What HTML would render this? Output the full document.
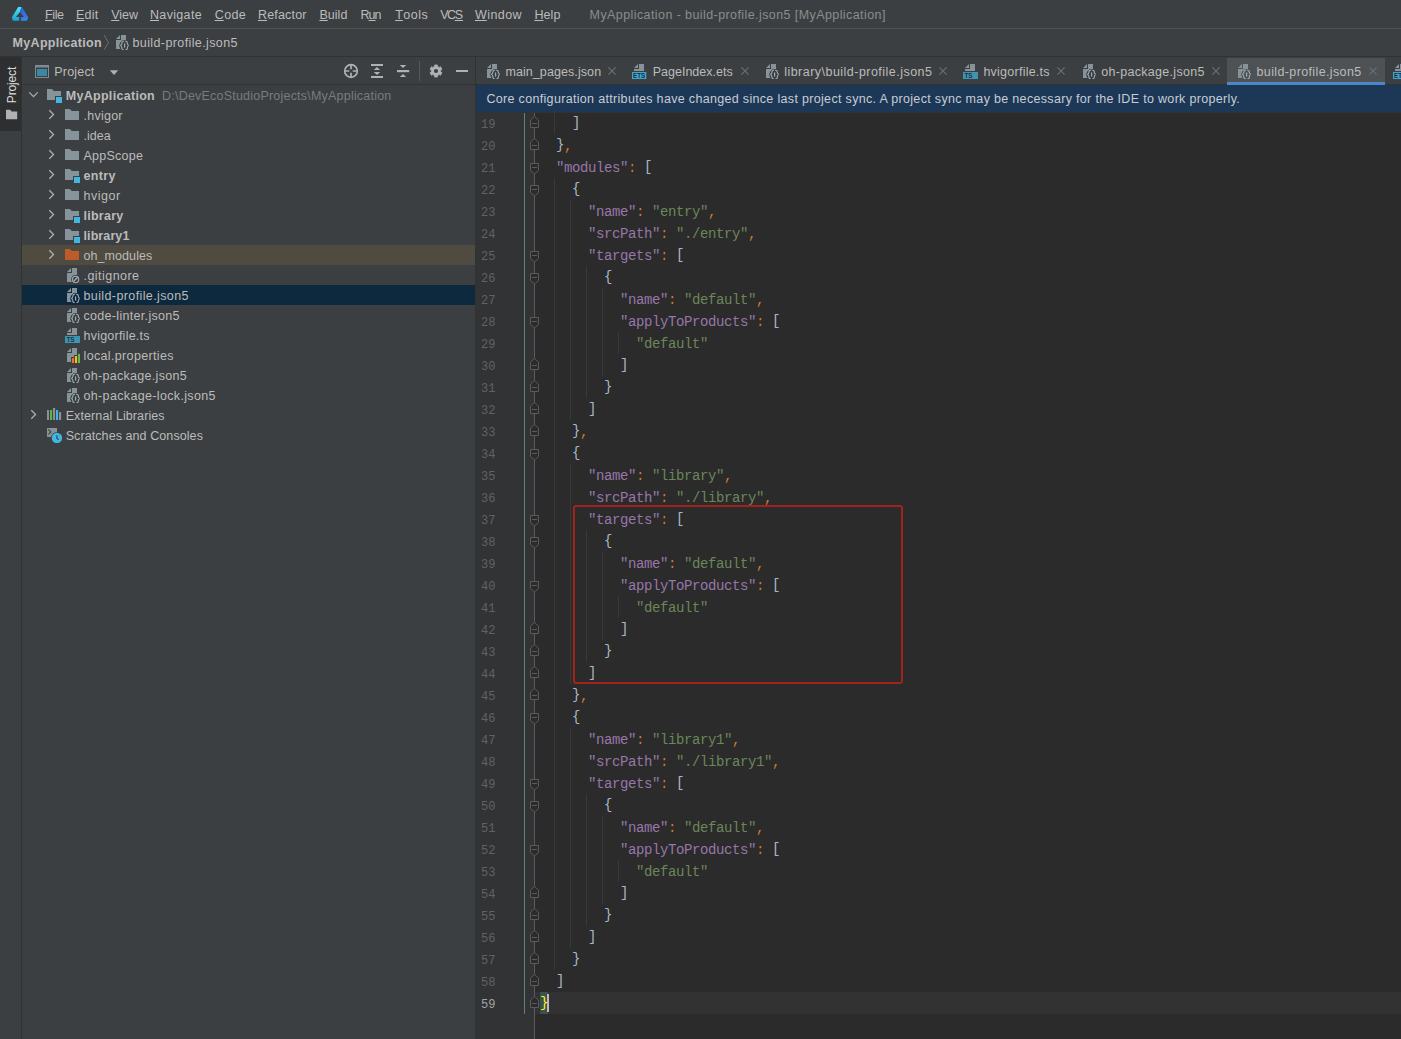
<!DOCTYPE html>
<html>
<head>
<meta charset="utf-8">
<title>MyApplication - build-profile.json5</title>
<style>
*{box-sizing:border-box;margin:0;padding:0}
html,body{width:1401px;height:1039px;overflow:hidden;background:#3c3f41}
body{font-family:"Liberation Sans",sans-serif;font-size:12.5px;color:#bbbbbb;position:relative}
.abs{position:absolute}
.t{position:absolute;white-space:pre;line-height:16px;height:16px;transform-origin:0 50%}
svg{position:absolute;overflow:visible}
/* top bars */
#menubar{left:0;top:0;width:1401px;height:28px;background:#3c3f41}
#menuline{left:0;top:28px;width:1401px;height:1px;background:#515151}
#navbar{left:0;top:29px;width:1401px;height:27px;background:#3c3f41}
#navline{left:0;top:56px;width:1401px;height:1px;background:#323232}
/* left strip */
#strip{left:0;top:57px;width:22px;height:982px;background:#3c3f41}
#striptab{left:0;top:57px;width:21px;height:74px;background:#2d2f30}
#stripline{left:21px;top:57px;width:1px;height:982px;background:#323232}
/* project */
#phead{left:22px;top:57px;width:453px;height:27px;background:#3c3f41}
#pheadline{left:22px;top:84px;width:453px;height:1px;background:#323232}
#tree{left:22px;top:85px;width:453px;height:954px;background:#3c3f41}
.row{position:absolute;left:22px;width:453px;height:20px}
/* editor */
#edsplit{left:475px;top:57px;width:1px;height:982px;background:#323232}
#tabs{left:476px;top:57px;width:925px;height:28px;background:#3c3f41}
#tabsline{left:475px;top:84px;width:926px;height:1px;background:#323232}
#seltab{left:1227px;top:58px;width:158px;height:24px;background:#4e5254}
#selul{left:1227px;top:82px;width:158px;height:3px;background:#4a88c7}
#banner{left:475px;top:85px;width:926px;height:27px;background:#1d3857}
#editor{left:475px;top:112px;width:926px;height:927px;background:#2b2b2b}
#gutter{left:475px;top:112px;width:60px;height:927px;background:#313335}
#caretrow{left:535px;top:992px;width:866px;height:22px;background:#323232}
.ln{position:absolute;left:475px;width:40px;height:22px;line-height:22px;font-family:"Liberation Mono",monospace;font-size:12px;color:#606366;padding-left:6px;white-space:pre}
.cl{position:absolute;left:540px;height:22px;line-height:22px;font-family:"Liberation Mono",monospace;font-size:14px;letter-spacing:-0.4px;color:#a9b7c6;white-space:pre}
.b{position:relative;top:-1px}.k{color:#9876aa}.s{color:#6a8759}.p{color:#cc7832}
.ig{position:absolute;width:1px;background:#393939}
</style>
</head>
<body>
<div class="abs" id="menubar"></div>
<div class="abs" id="menuline"></div>
<div class="abs" id="navbar"></div>
<div class="abs" id="navline"></div>
<div class="abs" id="strip"></div>
<div class="abs" id="striptab"></div>
<div class="abs" id="stripline"></div>
<div class="abs" id="phead"></div>
<div class="abs" id="pheadline"></div>
<div class="abs" id="tree"></div>
<div class="abs" id="tabs"></div>
<div class="abs" id="tabsline"></div>
<div class="abs" id="seltab"></div>
<div class="abs" id="selul"></div>
<div class="abs" id="banner"></div>
<div class="abs" id="editor"></div>
<div class="abs" id="gutter"></div>
<div class="abs" id="caretrow"></div>
<div class="abs" id="edsplit"></div>
<svg width="0" height="0" style="left:0;top:0">
<defs>
<symbol id="folder" viewBox="0 0 16 16"><path d="M1 2H5.700L7.9 4H15V13H1z" fill="#87939a"/></symbol>
<symbol id="folderx" viewBox="0 0 16 16"><path d="M1 2H5.700L7.9 4H15V13H1z" fill="#bd5c2a"/></symbol>
<symbol id="mfolder" viewBox="0 0 16 16"><path d="M1 2H5.700L7.9 4H15V9H9V13H1z" fill="#87939a"/><rect x="10" y="10" width="6.2" height="6.1" fill="#40b6e0"/></symbol>
<symbol id="fjson" viewBox="0 0 16 16"><path d="M3 5L7 1V5z" fill="#87939a"/><path d="M8 1H13V6.300H9.600L7.200 8.400 6.100 11.500 7 14.300 7.500 15H3V6H8z" fill="#87939a"/><g fill="none" stroke="#9eaab2" stroke-width="1.150" stroke-linecap="round"><path d="M10.400 7.300c-1.400 0-1.500 .7-1.500 1.800s-.2 2.100-1.700 2.400c1.500 .3 1.700 1.300 1.700 2.400s.1 1.800 1.500 1.800"/><path d="M12.800 7.300c1.400 0 1.500 .7 1.500 1.800s.2 2.100 1.700 2.400c-1.500 .3-1.700 1.300-1.700 2.400s-.1 1.800-1.500 1.800"/><path d="M11.600 9.900v3.200" stroke-width="1.250"/></g></symbol>
<symbol id="fts" viewBox="0 0 16 16"><path d="M3 5L7 1V5z" fill="#87939a"/><path d="M8 1H13V8H3V6H8z" fill="#87939a"/><rect x="1" y="9" width="15.1" height="7.1" fill="#3f94b4"/><text x="2.4" y="14.9" font-family="Liberation Sans" font-weight="bold" font-size="6.4" fill="#20343f">TS</text></symbol>
<symbol id="fets" viewBox="0 0 16 16"><path d="M3 5L7 1V5z" fill="#87939a"/><path d="M8 1H13V8H3V6H8z" fill="#87939a"/><rect x="1" y="9" width="14.3" height="7" fill="#3ea6d0"/><text x="2" y="14.9" font-family="Liberation Sans" font-weight="bold" font-size="6.3" fill="#1f2f38">ETS</text></symbol>
<symbol id="fgit" viewBox="0 0 16 16"><path d="M3 5L7 1V5z" fill="#87939a"/><path d="M8 1H13V8H11.600A4.5 4.5 0 0 0 7.2 12.4 4.5 4.5 0 0 0 8 15H3V6H8z" fill="#87939a"/><circle cx="11.6" cy="12.4" r="3.1" fill="none" stroke="#a3adb4" stroke-width="1.1"/><path d="M9.5 14.500L13.7 10.3" stroke="#a3adb4" stroke-width="1.3"/></symbol>
<symbol id="fprop" viewBox="0 0 16 16"><path d="M3 5L7 1V5z" fill="#87939a"/><path d="M8 1H13V8H10V10H7V15H3V6H8z" fill="#87939a"/><rect x="7.9" y="11.1" width="2.1" height="4.9" fill="#f4711f"/><rect x="10.9" y="9" width="2.2" height="7" fill="#fab736"/><rect x="14" y="6.9" width="2.1" height="9.1" fill="#63bc3b"/></symbol>
<symbol id="extlib" viewBox="0 0 16 16"><rect x="1" y="3" width="2" height="10" fill="#87939a"/><rect x="4" y="3" width="2.1" height="10" fill="#62b543"/><rect x="7" y="1" width="2.1" height="12" fill="#87939a"/><rect x="10" y="3" width="2.1" height="10" fill="#40b6e0"/><rect x="13" y="5" width="2.1" height="8" fill="#87939a"/></symbol>
<symbol id="scratch" viewBox="0 0 16 16"><path d="M1 1H11V5.300A6.2 6.2 0 0 0 5 10H1z" fill="#87939a"/><path d="M2.4 2.500L4.9 4.9 2.4 7.3" fill="none" stroke="#3c3f41" stroke-width="1.1"/><circle cx="10.9" cy="11" r="5.2" fill="#40b6e0"/><path d="M10.9 8.300V11.300L12.7 12.7" fill="none" stroke="#37525f" stroke-width="1.3"/></symbol>
<symbol id="chr" viewBox="0 0 16 16"><path d="M6.3 3.300L10.5 7.5 6.3 11.7" fill="none" stroke="#adafb1" stroke-width="1.3"/></symbol>
<symbol id="chd" viewBox="0 0 16 16"><path d="M3.3 5.400L7.5 9.6 11.7 5.4" fill="none" stroke="#adafb1" stroke-width="1.3"/></symbol>
<symbol id="close" viewBox="0 0 16 16"><path d="M4.4 4.400l7.2 7.200M11.6 4.400l-7.2 7.2" fill="none" stroke="#6e7173" stroke-width="1.050"/></symbol>
<symbol id="fs" viewBox="0 0 9 12"><path d="M.5 .5H8.5V7.5L4.5 11 .5 7.5z" fill="#2b2b2b" stroke="#595b5d" stroke-width="1"/><path d="M2 4.500H7" stroke="#595b5d" stroke-width="1"/></symbol>
<symbol id="fe" viewBox="0 0 9 12"><path d="M.5 11.500H8.500V4L4.500 .5 .5 4z" fill="#2b2b2b" stroke="#595b5d" stroke-width="1"/><path d="M2 7.500H7" stroke="#595b5d" stroke-width="1"/></symbol>
</defs></svg>
<svg style="left:0px;top:0px" width="40" height="28" viewBox="0 0 40 28"><defs><linearGradient id="lgc" x1="0" y1="0" x2="0" y2="1"><stop offset="0" stop-color="#4fe8ee"/><stop offset="1" stop-color="#15a0d6"/></linearGradient><linearGradient id="lgb" x1="0" y1="0" x2="0.3" y2="1"><stop offset="0" stop-color="#2560d2"/><stop offset=".75" stop-color="#3a72da"/><stop offset="1" stop-color="#2b8de6"/></linearGradient></defs><path d="M18.2 6.900H21.900L19.9 12.1 16 16.900H19.200V20.700H12.900L11.9 17.300z" fill="url(#lgc)"/><path d="M21.5 6.900H22.100L28.1 17.3 27 20.700H20.900V16.900H23.900L19.9 12.100z" fill="url(#lgb)"/></svg>
<span class="t" style="left:45.00px;top:6.5px;letter-spacing:-0.375px"><u style="letter-spacing:0;margin-right:-0.375px">F</u>ile</span>
<span class="t" style="left:76.00px;top:6.5px;letter-spacing:0.192px"><u style="letter-spacing:0;margin-right:0.192px">E</u>dit</span>
<span class="t" style="left:111.20px;top:6.5px;letter-spacing:-0.000px"><u style="letter-spacing:0;margin-right:-0.000px">V</u>iew</span>
<span class="t" style="left:150.00px;top:6.5px;letter-spacing:0.332px"><u style="letter-spacing:0;margin-right:0.332px">N</u>avigate</span>
<span class="t" style="left:214.70px;top:6.5px;letter-spacing:0.408px"><u style="letter-spacing:0;margin-right:0.408px">C</u>ode</span>
<span class="t" style="left:258.00px;top:6.5px;letter-spacing:0.179px"><u style="letter-spacing:0;margin-right:0.179px">R</u>efactor</span>
<span class="t" style="left:319.40px;top:6.5px;letter-spacing:0.038px"><u style="letter-spacing:0;margin-right:0.038px">B</u>uild</span>
<span class="t" style="left:360.50px;top:6.5px;letter-spacing:-0.938px">R<u style="letter-spacing:0;margin-right:-0.938px">u</u>n</span>
<span class="t" style="left:395.20px;top:6.5px;letter-spacing:0.494px"><u style="letter-spacing:0;margin-right:0.494px">T</u>ools</span>
<span class="t" style="left:440.20px;top:6.5px;letter-spacing:-1.425px">VC<u style="letter-spacing:0;margin-right:-1.425px">S</u></span>
<span class="t" style="left:475.00px;top:6.5px;letter-spacing:0.420px"><u style="letter-spacing:0;margin-right:0.420px">W</u>indow</span>
<span class="t" style="left:534.40px;top:6.5px;letter-spacing:0.083px"><u style="letter-spacing:0;margin-right:0.083px">H</u>elp</span>
<span class="t" style="left:589.60px;top:6.50px;color:#8a8d8f;letter-spacing:0.413px;">MyApplication - build-profile.json5 [MyApplication]</span>
<span class="t" style="left:12.60px;top:34.50px;font-weight:bold;letter-spacing:0.302px;">MyApplication</span>
<svg style="left:103px;top:34px" width="8" height="17" viewBox="0 0 8 17"><path d="M1.1 1L5.400 8.500 1.100 15.8" fill="none" stroke="#6b6e70" stroke-width="1"/></svg>
<svg style="left:113px;top:34px" width="16" height="16"><use href="#fjson"/></svg>
<span class="t" style="left:132.50px;top:34.50px;letter-spacing:0.389px;">build-profile.json5</span>
<span class="t" style="left:12px;top:77px;font-size:12px;color:#dcdcdc;transform:translate(-50%,0) rotate(-90deg);transform-origin:50% 50%;letter-spacing:-0.150px">Project</span>
<svg style="left:6px;top:109px" width="12" height="11" viewBox="0 0 12 11"><path d="M0 .8h4.200l1.4 1.700H11.200v7.700H0z" fill="#afb1b3"/></svg>
<svg style="left:35px;top:65px" width="14" height="13" viewBox="0 0 14 13"><rect x=".5" y=".5" width="13" height="12" fill="none" stroke="#7f8b91"/><rect x="0" y="0" width="14" height="2.5" fill="#7f8b91"/><rect x="2" y="4" width="10" height="7" fill="#3a88a6"/></svg>
<span class="t" style="left:54.30px;top:63.50px;letter-spacing:0.188px;">Project</span>
<svg style="left:109px;top:69px" width="10" height="7" viewBox="0 0 10 7"><path d="M.8 1.300h8.400L5 6z" fill="#afb1b3"/></svg>
<svg style="left:343px;top:63px" width="16" height="16" viewBox="0 0 16 16"><circle cx="8" cy="8" r="6.3" fill="none" stroke="#afb1b3" stroke-width="1.7"/><path d="M8 1.500V6.300M8 9.700V14.500M1.5 8H6.300M9.7 8H14.5" stroke="#afb1b3" stroke-width="1.7"/></svg>
<svg style="left:369px;top:63px" width="16" height="16" viewBox="0 0 16 16"><path d="M2 2H14M2 14H14" stroke="#afb1b3" stroke-width="2.1"/><path d="M8 4L11.2 7.100H4.800zM8 12L11.2 8.900H4.800z" fill="#afb1b3"/></svg>
<svg style="left:395px;top:63px" width="16" height="16" viewBox="0 0 16 16"><path d="M2 8.100H14.2" stroke="#afb1b3" stroke-width="2.2"/><path d="M8 5.100L11.2 2H4.800zM8 11L11.2 14H4.800z" fill="#afb1b3"/></svg>
<div class="abs" style="left:419px;top:61px;width:1px;height:20px;background:#555758"></div>
<svg style="left:429px;top:64px" width="14" height="14" viewBox="0 0 14 14"><path d="M5.47 2.45 L5.57 0.92 L8.43 0.92 L8.53 2.45 L10.17 3.40 L11.56 2.72 L12.98 5.19 L11.71 6.05 L11.71 7.95 L12.98 8.81 L11.56 11.28 L10.17 10.60 L8.53 11.55 L8.43 13.08 L5.57 13.08 L5.47 11.55 L3.83 10.60 L2.44 11.28 L1.02 8.81 L2.29 7.95 L2.29 6.05 L1.02 5.19 L2.44 2.72 L3.83 3.40Z" fill="#afb1b3" stroke="#afb1b3" stroke-width=".7" stroke-linejoin="round"/><circle cx="7" cy="7" r="2.1" fill="#3c3f41"/></svg>
<div class="abs" style="left:456px;top:70px;width:12px;height:2px;background:#afb1b3"></div>
<div class="abs" style="left:22px;top:245px;width:453px;height:20px;background:#4f4b41"></div>
<div class="abs" style="left:22px;top:285px;width:453px;height:20px;background:#0d293e"></div>
<svg style="left:26px;top:87px" width="16" height="16"><use href="#chd"/></svg>
<svg style="left:46px;top:87px" width="16" height="16"><use href="#mfolder"/></svg>
<span class="t" style="left:65.70px;top:87.50px;font-weight:bold;letter-spacing:0.302px;">MyApplication</span>
<span class="t" style="left:162.10px;top:87.50px;color:#787b7d;letter-spacing:0.210px;">D:\DevEcoStudioProjects\MyApplication</span>
<svg style="left:43px;top:107px" width="16" height="16"><use href="#chr"/></svg>
<svg style="left:64px;top:107px" width="16" height="16"><use href="#folder"/></svg>
<span class="t" style="left:83.50px;top:107.50px;letter-spacing:0.250px;">.hvigor</span>
<svg style="left:43px;top:127px" width="16" height="16"><use href="#chr"/></svg>
<svg style="left:64px;top:127px" width="16" height="16"><use href="#folder"/></svg>
<span class="t" style="left:83.50px;top:127.50px;letter-spacing:0.019px;">.idea</span>
<svg style="left:43px;top:147px" width="16" height="16"><use href="#chr"/></svg>
<svg style="left:64px;top:147px" width="16" height="16"><use href="#folder"/></svg>
<span class="t" style="left:83.50px;top:147.50px;letter-spacing:0.254px;">AppScope</span>
<svg style="left:43px;top:167px" width="16" height="16"><use href="#chr"/></svg>
<svg style="left:64px;top:167px" width="16" height="16"><use href="#mfolder"/></svg>
<span class="t" style="left:83.50px;top:167.50px;font-weight:bold;letter-spacing:0.319px;">entry</span>
<svg style="left:43px;top:187px" width="16" height="16"><use href="#chr"/></svg>
<svg style="left:64px;top:187px" width="16" height="16"><use href="#folder"/></svg>
<span class="t" style="left:83.50px;top:187.50px;letter-spacing:0.520px;">hvigor</span>
<svg style="left:43px;top:207px" width="16" height="16"><use href="#chr"/></svg>
<svg style="left:64px;top:207px" width="16" height="16"><use href="#mfolder"/></svg>
<span class="t" style="left:83.50px;top:207.50px;font-weight:bold;letter-spacing:0.258px;">library</span>
<svg style="left:43px;top:227px" width="16" height="16"><use href="#chr"/></svg>
<svg style="left:64px;top:227px" width="16" height="16"><use href="#mfolder"/></svg>
<span class="t" style="left:83.50px;top:227.50px;font-weight:bold;letter-spacing:0.096px;">library1</span>
<svg style="left:43px;top:247px" width="16" height="16"><use href="#chr"/></svg>
<svg style="left:64px;top:247px" width="16" height="16"><use href="#folderx"/></svg>
<span class="t" style="left:83.50px;top:247.50px;letter-spacing:0.075px;">oh_modules</span>
<svg style="left:64px;top:267px" width="16" height="16"><use href="#fgit"/></svg>
<span class="t" style="left:83.50px;top:267.50px;letter-spacing:0.458px;">.gitignore</span>
<svg style="left:64px;top:287px" width="16" height="16"><use href="#fjson"/></svg>
<span class="t" style="left:83.50px;top:287.50px;letter-spacing:0.389px;">build-profile.json5</span>
<svg style="left:64px;top:307px" width="16" height="16"><use href="#fjson"/></svg>
<span class="t" style="left:83.50px;top:307.50px;letter-spacing:0.312px;">code-linter.json5</span>
<svg style="left:64px;top:327px" width="16" height="16"><use href="#fts"/></svg>
<span class="t" style="left:83.50px;top:327.50px;letter-spacing:0.229px;">hvigorfile.ts</span>
<svg style="left:64px;top:347px" width="16" height="16"><use href="#fprop"/></svg>
<span class="t" style="left:83.50px;top:347.50px;letter-spacing:0.350px;">local.properties</span>
<svg style="left:64px;top:367px" width="16" height="16"><use href="#fjson"/></svg>
<span class="t" style="left:83.50px;top:367.50px;letter-spacing:0.298px;">oh-package.json5</span>
<svg style="left:64px;top:387px" width="16" height="16"><use href="#fjson"/></svg>
<span class="t" style="left:83.50px;top:387.50px;letter-spacing:0.344px;">oh-package-lock.json5</span>
<svg style="left:25px;top:407px" width="16" height="16"><use href="#chr"/></svg>
<svg style="left:46px;top:407px" width="16" height="16"><use href="#extlib"/></svg>
<span class="t" style="left:65.70px;top:407.50px;letter-spacing:0.097px;">External Libraries</span>
<svg style="left:46px;top:427px" width="16" height="16"><use href="#scratch"/></svg>
<span class="t" style="left:65.70px;top:427.50px;letter-spacing:0.081px;">Scratches and Consoles</span>
<svg style="left:484px;top:63px" width="16" height="16"><use href="#fjson"/></svg>
<span class="t" style="left:505.40px;top:63.50px;letter-spacing:0.086px;">main_pages.json</span>
<svg style="left:604px;top:63.3px" width="16" height="16"><use href="#close"/></svg>
<svg style="left:631px;top:63px" width="16" height="16"><use href="#fets"/></svg>
<span class="t" style="left:652.70px;top:63.50px;letter-spacing:0.010px;">PageIndex.ets</span>
<svg style="left:736.5px;top:63.3px" width="16" height="16"><use href="#close"/></svg>
<svg style="left:763px;top:63px" width="16" height="16"><use href="#fjson"/></svg>
<span class="t" style="left:784.20px;top:63.50px;letter-spacing:0.473px;">library\build-profile.json5</span>
<svg style="left:935px;top:63.3px" width="16" height="16"><use href="#close"/></svg>
<svg style="left:962px;top:63px" width="16" height="16"><use href="#fts"/></svg>
<span class="t" style="left:983.40px;top:63.50px;letter-spacing:0.246px;">hvigorfile.ts</span>
<svg style="left:1053px;top:63.3px" width="16" height="16"><use href="#close"/></svg>
<svg style="left:1080px;top:63px" width="16" height="16"><use href="#fjson"/></svg>
<span class="t" style="left:1101.30px;top:63.50px;letter-spacing:0.298px;">oh-package.json5</span>
<svg style="left:1208.3px;top:63.3px" width="16" height="16"><use href="#close"/></svg>
<svg style="left:1235px;top:63px" width="16" height="16"><use href="#fjson"/></svg>
<span class="t" style="left:1256.50px;top:63.50px;letter-spacing:0.372px;">build-profile.json5</span>
<svg style="left:1365px;top:63.3px" width="16" height="16"><use href="#close"/></svg>
<svg style="left:1392px;top:63px" width="16" height="16"><use href="#fets"/></svg>
<span class="t" style="left:486.40px;top:91.00px;color:#c7cdd3;letter-spacing:0.324px;">Core configuration attributes have changed since last project sync. A project sync may be necessary for the IDE to work properly.</span>
<div class="ig" style="left:554px;top:112px;height:22px"></div>
<div class="ig" style="left:554px;top:178px;height:792px"></div>
<div class="ig" style="left:570px;top:200px;height:220px"></div>
<div class="ig" style="left:570px;top:464px;height:220px"></div>
<div class="ig" style="left:570px;top:728px;height:220px"></div>
<div class="ig" style="left:586px;top:266px;height:132px"></div>
<div class="ig" style="left:586px;top:530px;height:132px"></div>
<div class="ig" style="left:586px;top:794px;height:132px"></div>
<div class="ig" style="left:602px;top:288px;height:88px"></div>
<div class="ig" style="left:602px;top:552px;height:88px"></div>
<div class="ig" style="left:602px;top:816px;height:88px"></div>
<div class="ig" style="left:618px;top:332px;height:22px"></div>
<div class="ig" style="left:618px;top:596px;height:22px"></div>
<div class="ig" style="left:618px;top:860px;height:22px"></div>
<div class="abs" style="left:524px;top:112px;width:1px;height:902px;background:#5a857e"></div>
<div class="abs" style="left:534px;top:112px;width:1px;height:927px;background:#595b5d"></div>
<div class="abs" style="left:540px;top:992px;width:8px;height:22px;background:#3b514d"></div>
<span class="ln" style="top:114px;color:#606366">19</span><span class="cl" style="left:572px;top:113px"><span class="b">]</span></span>
<span class="ln" style="top:136px;color:#606366">20</span><span class="cl" style="left:556px;top:135px"><span class="b">}</span><span class="p">,</span></span>
<span class="ln" style="top:158px;color:#606366">21</span><span class="cl" style="left:556px;top:157px"><span class="k">"modules"</span><span class="p">:</span> <span class="b">[</span></span>
<span class="ln" style="top:180px;color:#606366">22</span><span class="cl" style="left:572px;top:179px"><span class="b">{</span></span>
<span class="ln" style="top:202px;color:#606366">23</span><span class="cl" style="left:588px;top:201px"><span class="k">"name"</span><span class="p">:</span> <span class="s">"entry"</span><span class="p">,</span></span>
<span class="ln" style="top:224px;color:#606366">24</span><span class="cl" style="left:588px;top:223px"><span class="k">"srcPath"</span><span class="p">:</span> <span class="s">"./entry"</span><span class="p">,</span></span>
<span class="ln" style="top:246px;color:#606366">25</span><span class="cl" style="left:588px;top:245px"><span class="k">"targets"</span><span class="p">:</span> <span class="b">[</span></span>
<span class="ln" style="top:268px;color:#606366">26</span><span class="cl" style="left:604px;top:267px"><span class="b">{</span></span>
<span class="ln" style="top:290px;color:#606366">27</span><span class="cl" style="left:620px;top:289px"><span class="k">"name"</span><span class="p">:</span> <span class="s">"default"</span><span class="p">,</span></span>
<span class="ln" style="top:312px;color:#606366">28</span><span class="cl" style="left:620px;top:311px"><span class="k">"applyToProducts"</span><span class="p">:</span> <span class="b">[</span></span>
<span class="ln" style="top:334px;color:#606366">29</span><span class="cl" style="left:636px;top:333px"><span class="s">"default"</span></span>
<span class="ln" style="top:356px;color:#606366">30</span><span class="cl" style="left:620px;top:355px"><span class="b">]</span></span>
<span class="ln" style="top:378px;color:#606366">31</span><span class="cl" style="left:604px;top:377px"><span class="b">}</span></span>
<span class="ln" style="top:400px;color:#606366">32</span><span class="cl" style="left:588px;top:399px"><span class="b">]</span></span>
<span class="ln" style="top:422px;color:#606366">33</span><span class="cl" style="left:572px;top:421px"><span class="b">}</span><span class="p">,</span></span>
<span class="ln" style="top:444px;color:#606366">34</span><span class="cl" style="left:572px;top:443px"><span class="b">{</span></span>
<span class="ln" style="top:466px;color:#606366">35</span><span class="cl" style="left:588px;top:465px"><span class="k">"name"</span><span class="p">:</span> <span class="s">"library"</span><span class="p">,</span></span>
<span class="ln" style="top:488px;color:#606366">36</span><span class="cl" style="left:588px;top:487px"><span class="k">"srcPath"</span><span class="p">:</span> <span class="s">"./library"</span><span class="p">,</span></span>
<span class="ln" style="top:510px;color:#606366">37</span><span class="cl" style="left:588px;top:509px"><span class="k">"targets"</span><span class="p">:</span> <span class="b">[</span></span>
<span class="ln" style="top:532px;color:#606366">38</span><span class="cl" style="left:604px;top:531px"><span class="b">{</span></span>
<span class="ln" style="top:554px;color:#606366">39</span><span class="cl" style="left:620px;top:553px"><span class="k">"name"</span><span class="p">:</span> <span class="s">"default"</span><span class="p">,</span></span>
<span class="ln" style="top:576px;color:#606366">40</span><span class="cl" style="left:620px;top:575px"><span class="k">"applyToProducts"</span><span class="p">:</span> <span class="b">[</span></span>
<span class="ln" style="top:598px;color:#606366">41</span><span class="cl" style="left:636px;top:597px"><span class="s">"default"</span></span>
<span class="ln" style="top:620px;color:#606366">42</span><span class="cl" style="left:620px;top:619px"><span class="b">]</span></span>
<span class="ln" style="top:642px;color:#606366">43</span><span class="cl" style="left:604px;top:641px"><span class="b">}</span></span>
<span class="ln" style="top:664px;color:#606366">44</span><span class="cl" style="left:588px;top:663px"><span class="b">]</span></span>
<span class="ln" style="top:686px;color:#606366">45</span><span class="cl" style="left:572px;top:685px"><span class="b">}</span><span class="p">,</span></span>
<span class="ln" style="top:708px;color:#606366">46</span><span class="cl" style="left:572px;top:707px"><span class="b">{</span></span>
<span class="ln" style="top:730px;color:#606366">47</span><span class="cl" style="left:588px;top:729px"><span class="k">"name"</span><span class="p">:</span> <span class="s">"library1"</span><span class="p">,</span></span>
<span class="ln" style="top:752px;color:#606366">48</span><span class="cl" style="left:588px;top:751px"><span class="k">"srcPath"</span><span class="p">:</span> <span class="s">"./library1"</span><span class="p">,</span></span>
<span class="ln" style="top:774px;color:#606366">49</span><span class="cl" style="left:588px;top:773px"><span class="k">"targets"</span><span class="p">:</span> <span class="b">[</span></span>
<span class="ln" style="top:796px;color:#606366">50</span><span class="cl" style="left:604px;top:795px"><span class="b">{</span></span>
<span class="ln" style="top:818px;color:#606366">51</span><span class="cl" style="left:620px;top:817px"><span class="k">"name"</span><span class="p">:</span> <span class="s">"default"</span><span class="p">,</span></span>
<span class="ln" style="top:840px;color:#606366">52</span><span class="cl" style="left:620px;top:839px"><span class="k">"applyToProducts"</span><span class="p">:</span> <span class="b">[</span></span>
<span class="ln" style="top:862px;color:#606366">53</span><span class="cl" style="left:636px;top:861px"><span class="s">"default"</span></span>
<span class="ln" style="top:884px;color:#606366">54</span><span class="cl" style="left:620px;top:883px"><span class="b">]</span></span>
<span class="ln" style="top:906px;color:#606366">55</span><span class="cl" style="left:604px;top:905px"><span class="b">}</span></span>
<span class="ln" style="top:928px;color:#606366">56</span><span class="cl" style="left:588px;top:927px"><span class="b">]</span></span>
<span class="ln" style="top:950px;color:#606366">57</span><span class="cl" style="left:572px;top:949px"><span class="b">}</span></span>
<span class="ln" style="top:972px;color:#606366">58</span><span class="cl" style="left:556px;top:971px"><span class="b">]</span></span>
<span class="ln" style="top:994px;color:#a4a3a3">59</span><span class="cl" style="left:540px;top:993px"><span class="b" style="color:#ffef28">}</span></span>
<div class="abs" style="left:547px;top:994px;width:2px;height:18px;background:#bbbbbb"></div>
<svg style="left:530px;top:163px" width="9" height="12"><use href="#fs"/></svg>
<svg style="left:530px;top:185px" width="9" height="12"><use href="#fs"/></svg>
<svg style="left:530px;top:251px" width="9" height="12"><use href="#fs"/></svg>
<svg style="left:530px;top:273px" width="9" height="12"><use href="#fs"/></svg>
<svg style="left:530px;top:317px" width="9" height="12"><use href="#fs"/></svg>
<svg style="left:530px;top:449px" width="9" height="12"><use href="#fs"/></svg>
<svg style="left:530px;top:515px" width="9" height="12"><use href="#fs"/></svg>
<svg style="left:530px;top:537px" width="9" height="12"><use href="#fs"/></svg>
<svg style="left:530px;top:581px" width="9" height="12"><use href="#fs"/></svg>
<svg style="left:530px;top:713px" width="9" height="12"><use href="#fs"/></svg>
<svg style="left:530px;top:779px" width="9" height="12"><use href="#fs"/></svg>
<svg style="left:530px;top:801px" width="9" height="12"><use href="#fs"/></svg>
<svg style="left:530px;top:845px" width="9" height="12"><use href="#fs"/></svg>
<svg style="left:530px;top:116px" width="9" height="12"><use href="#fe"/></svg>
<svg style="left:530px;top:138px" width="9" height="12"><use href="#fe"/></svg>
<svg style="left:530px;top:358px" width="9" height="12"><use href="#fe"/></svg>
<svg style="left:530px;top:380px" width="9" height="12"><use href="#fe"/></svg>
<svg style="left:530px;top:402px" width="9" height="12"><use href="#fe"/></svg>
<svg style="left:530px;top:424px" width="9" height="12"><use href="#fe"/></svg>
<svg style="left:530px;top:622px" width="9" height="12"><use href="#fe"/></svg>
<svg style="left:530px;top:644px" width="9" height="12"><use href="#fe"/></svg>
<svg style="left:530px;top:666px" width="9" height="12"><use href="#fe"/></svg>
<svg style="left:530px;top:688px" width="9" height="12"><use href="#fe"/></svg>
<svg style="left:530px;top:886px" width="9" height="12"><use href="#fe"/></svg>
<svg style="left:530px;top:908px" width="9" height="12"><use href="#fe"/></svg>
<svg style="left:530px;top:930px" width="9" height="12"><use href="#fe"/></svg>
<svg style="left:530px;top:952px" width="9" height="12"><use href="#fe"/></svg>
<svg style="left:530px;top:974px" width="9" height="12"><use href="#fe"/></svg>
<svg style="left:530px;top:996px" width="9" height="12"><use href="#fe"/></svg>
<div class="abs" style="left:476px;top:112px;width:925px;height:1px;background:#323232"></div>
<div class="abs" style="left:573px;top:505px;width:330px;height:179px;border:2px solid #a2231b;border-radius:3px"></div>

<!--TREE-->
<!--TABS-->
<!--CODE-->
</body>
</html>
